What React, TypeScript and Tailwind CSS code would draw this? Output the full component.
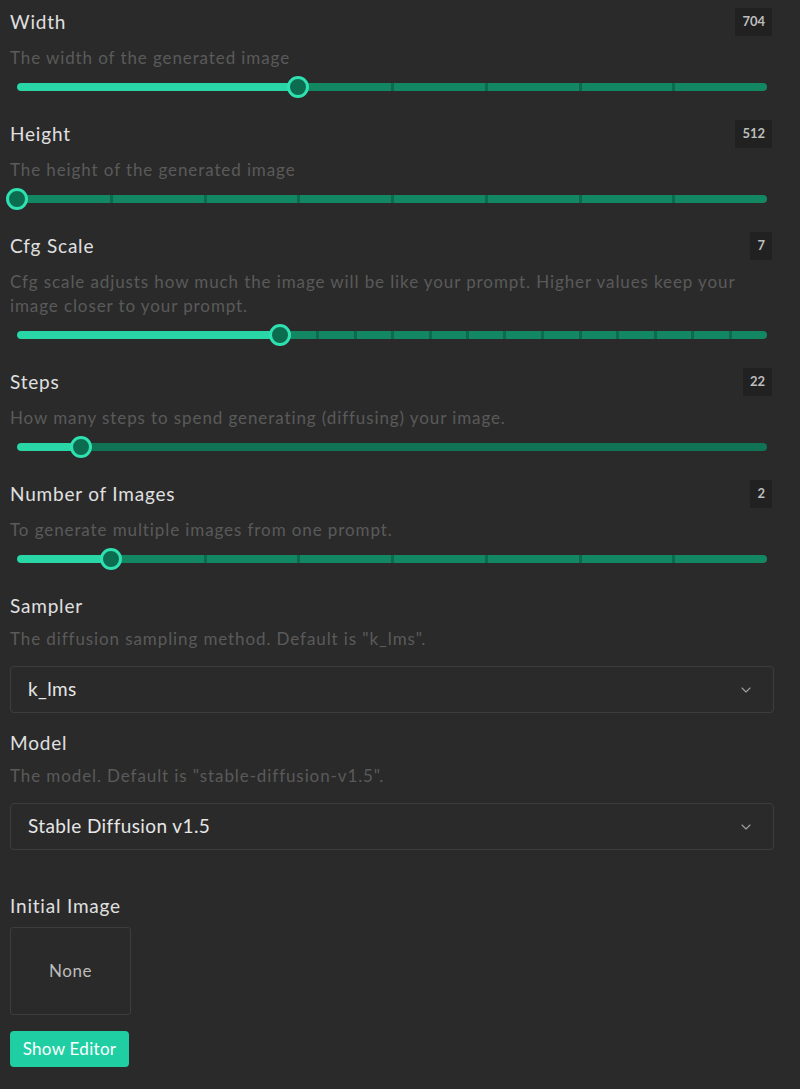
import React from "react";
import { ChevronDown } from "lucide-react";

type SliderProps = { label: string; desc: string; value: number; min: number; max: number; step: number };

function Slider({ value, min, max, step }: { value: number; min: number; max: number; step: number }) {
  const frac = (value - min) / (max - min);
  const n = Math.round((max - min) / step);
  const dense = n > 40;
  const ticks: number[] = [];
  if (!dense) {
    for (let i = 1; i < n; i++) {
      const f = i / n;
      if (f > frac + 0.01) ticks.push(f);
    }
  }
  return (
    <div className="relative h-[24px] mx-[7px]">
      <div
        className={`absolute left-0 right-0 top-[8px] h-[8px] rounded-full overflow-hidden ${dense ? "bg-[#0f7354]" : "bg-[#128761]"}`}
      >
        {ticks.map((f, i) => (
          <div key={i} className="absolute top-0 h-full w-[3px] bg-[#0d6a4d]" style={{ left: `calc(${f * 100}% - 1px)` }} />
        ))}
        <div className="absolute left-0 top-0 h-full rounded-full bg-[#29d6a6]" style={{ width: `${frac * 100}%` }} />
      </div>
      <div
        className="absolute top-[1px] w-[22px] h-[22px] -ml-[11px] rounded-full border-[3px] border-[#2fe0b1] bg-[#0c6c4f]"
        style={{ left: `${frac * 100}%` }}
      />
    </div>
  );
}

function SliderField({ label, desc, value, min, max, step }: SliderProps) {
  return (
    <div className="mb-[21px]">
      <div className="flex items-center justify-between h-[28px]">
        <span className="text-[19px] tracking-[0.8px] text-[#e0e0e0] leading-[28px]">{label}</span>
        <span className="mr-[2px] h-[28px] px-[7px] flex items-center bg-[#212121] text-[13px] font-bold text-[#bdbdbd]">{value}</span>
      </div>
      <p className="mt-[10px] max-w-[745px] text-[17px] tracking-[0.9px] leading-[24px] text-[#5a5a5a]">{desc}</p>
      <div className="mt-[5px]">
        <Slider value={value} min={min} max={max} step={step} />
      </div>
    </div>
  );
}

function SelectField({ label, desc, value }: { label: string; desc: string; value: string }) {
  return (
    <div>
      <div className="h-[28px] text-[19px] tracking-[0.8px] leading-[28px] text-[#e0e0e0]">{label}</div>
      <p className="mt-[7px] text-[17px] tracking-[0.9px] leading-[24px] text-[#5a5a5a]">{desc}</p>
      <div className="mt-[15px] h-[47px] rounded-[4px] border border-[#3d3d3d] flex items-center justify-between pl-[17px] pr-[19px]">
        <span className="text-[19px] tracking-[0.4px] text-[#e6e6e6]">{value}</span>
        <ChevronDown size={16} strokeWidth={1.6} color="#a0a0a0" />
      </div>
    </div>
  );
}

export default function App() {
  return (
    <div
      className="min-h-[1089px] bg-[#2a2a2a] pl-[10px] pr-[26px] pt-[8px]"
      style={{ fontFamily: "Lato, 'Noto Sans', sans-serif" }}
    >
      <SliderField label="Width" desc="The width of the generated image" value={704} min={512} max={1024} step={64} />
      <SliderField label="Height" desc="The height of the generated image" value={512} min={512} max={1024} step={64} />
      <SliderField
        label="Cfg Scale"
        desc="Cfg scale adjusts how much the image will be like your prompt. Higher values keep your image closer to your prompt."
        value={7}
        min={0}
        max={20}
        step={1}
      />
      <SliderField label="Steps" desc="How many steps to spend generating (diffusing) your image." value={22} min={10} max={150} step={1} />
      <SliderField label="Number of Images" desc="To generate multiple images from one prompt." value={2} min={1} max={9} step={1} />
      <SelectField label="Sampler" desc={'The diffusion sampling method. Default is "k_lms".'} value="k_lms" />
      <div className="mt-[16px]">
        <SelectField label="Model" desc={'The model. Default is "stable-diffusion-v1.5".'} value="Stable Diffusion v1.5" />
      </div>
      <div className="mt-[42px] h-[28px] text-[19px] tracking-[0.8px] leading-[28px] text-[#e0e0e0]">Initial Image</div>
      <div className="mt-[7px] w-[121px] h-[88px] rounded-[3px] border border-[#3d3d3d] flex items-center justify-center text-[17px] tracking-[0.6px] text-[#bdbdbd]">
        None
      </div>
      <button className="mt-[16px] h-[36px] w-[119px] rounded-[4px] bg-[#1fcfa3] text-[17px] tracking-[0.3px] text-white">
        Show Editor
      </button>
    </div>
  );
}
